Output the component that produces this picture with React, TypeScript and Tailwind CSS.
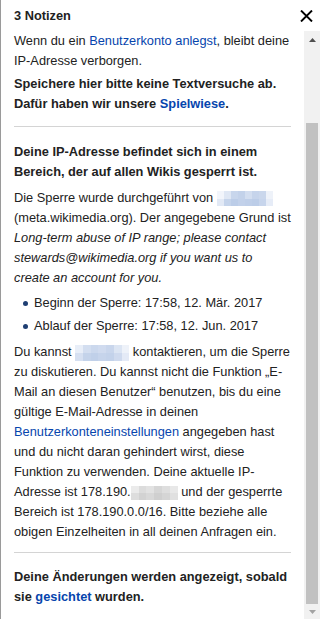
import React from "react";

type BlurProps = { w: string; h: string; rows: string[][] };

function Blur({ w, h, rows }: BlurProps) {
  return (
    <span className={`inline-flex flex-col align-middle ${w} ${h}`}>
      {rows.map((r, i) => (
        <span key={i} className="flex flex-1">
          {r.map((c, j) => (
            <span key={j} className={`flex-1 ${c}`} />
          ))}
        </span>
      ))}
    </span>
  );
}

const blurA = [
  ["bg-[#f2f5fb]", "bg-[#dfe7f4]", "bg-[#c8d6ec]", "bg-[#c3d2ea]", "bg-[#d3def0]", "bg-[#c6d4eb]", "bg-[#cad7ec]", "bg-[#eef2f9]"],
  ["bg-[#e2e9f5]", "bg-[#c5d4eb]", "bg-[#bccde8]", "bg-[#c2d1ea]", "bg-[#bfcfe9]", "bg-[#bccde8]", "bg-[#c7d5ec]", "bg-[#e6ecf7]"],
];
const blurB = [
  ["bg-[#e8eef8]", "bg-[#d3def0]", "bg-[#cbd8ed]", "bg-[#d0dbef]", "bg-[#c9d6ec]", "bg-[#dce5f3]", "bg-[#eef2f9]"],
  ["bg-[#d6e0f1]", "bg-[#c4d3ea]", "bg-[#c0d0e9]", "bg-[#c6d4eb]", "bg-[#c3d2ea]", "bg-[#cfdaee]", "bg-[#e4eaf6]"],
];
const blurC = [
  ["bg-[#ebebeb]", "bg-[#dcdcdc]", "bg-[#e2e2e2]", "bg-[#d6d6d6]", "bg-[#dedede]", "bg-[#e8e8e8]"],
  ["bg-[#dddddd]", "bg-[#d2d2d2]", "bg-[#d8d8d8]", "bg-[#cfcfcf]", "bg-[#d5d5d5]", "bg-[#e0e0e0]"],
];

function A({ children }: { children: React.ReactNode }) {
  return <span className="text-[#0645ad]">{children}</span>;
}

export default function App() {
  return (
    <div
      className="w-[320px] h-[619px] overflow-hidden bg-white border-l border-[#9a9a9a] flex flex-col text-[#222222] text-[12.8px] leading-[20px]"
      style={{ fontFamily: '"Liberation Sans", Arial, sans-serif' }}
    >
      <div className="h-[31px] shrink-0 flex items-center justify-between pl-[13px] pr-[7px]">
        <span className="font-bold">3 Notizen</span>
        <svg width="13" height="12" viewBox="0 0 13 12" className="block">
          <path d="M1 0.5 L12 11.5 M12 0.5 L1 11.5" stroke="#000" strokeWidth="1.9" fill="none" />
        </svg>
      </div>
      <div className="flex flex-1 min-h-0">
        <div className="flex-1 min-w-0 pl-[13px] pr-[13px] overflow-hidden">
          <p>
            Wenn du ein <A>Benutzerkonto anlegst</A>, bleibt deine IP-Adresse verborgen.
          </p>
          <p className="mt-[3px] font-bold">
            Speichere hier bitte keine Textversuche ab. Dafür haben wir unsere <A>Spielwiese</A>.
          </p>
          <div className="mt-[12px] mb-[15px] h-px bg-[#d4d4d4]" />
          <p className="font-bold">Deine IP-Adresse befindet sich in einem Bereich, der auf allen Wikis gesperrt ist.</p>
          <p className="mt-[6px]">
            Die Sperre wurde durchgeführt von{" "}
            <Blur w="w-[56px]" h="h-[15px]" rows={blurA} /> (meta.wikimedia.org). Der angegebene Grund ist{" "}
            <i>
              Long-term abuse of IP range; please contact stewards@wikimedia.org if you want us to create an account for
              you.
            </i>
          </p>
          <ul className="mt-[5px] pl-[20px] flex flex-col gap-[3px]">
            <li className="flex items-center gap-0 relative">
              <span className="absolute left-[-11px] top-[8px] w-[5px] h-[5px] rounded-full bg-[#1f3f73]" />
              Beginn der Sperre: 17:58, 12. Mär. 2017
            </li>
            <li className="flex items-center gap-0 relative">
              <span className="absolute left-[-11px] top-[8px] w-[5px] h-[5px] rounded-full bg-[#1f3f73]" />
              Ablauf der Sperre: 17:58, 12. Jun. 2017
            </li>
          </ul>
          <p className="mt-[6px]">
            Du kannst <Blur w="w-[54px]" h="h-[16px]" rows={blurB} /> kontaktieren, um die Sperre zu diskutieren. Du
            kannst nicht die Funktion „E-Mail an diesen Benutzer“ benutzen, bis du eine gültige E-Mail-Adresse in deinen{" "}
            <A>Benutzerkonteneinstellungen</A> angegeben hast und du nicht daran gehindert wirst, diese Funktion zu
            verwenden. Deine aktuelle IP-Adresse ist 178.190.
            <Blur w="w-[47px]" h="h-[14px]" rows={blurC} /> und der gesperrte Bereich ist 178.190.0.0/16. Bitte beziehe
            alle obigen Einzelheiten in all deinen Anfragen ein.
          </p>
          <div className="mt-[10px] mb-[14px] h-px bg-[#d4d4d4]" />
          <p className="font-bold">
            Deine Änderungen werden angezeigt, sobald sie <A>gesichtet</A> wurden.
          </p>
        </div>
        <div className="w-[16px] shrink-0 bg-[#f1f1f1] flex flex-col">
          <div className="h-[17px] flex justify-center pt-[7px]">
            <svg width="7" height="4" viewBox="0 0 7 4" className="block">
              <path d="M0 4 L3.5 0 L7 4 Z" fill="#505050" />
            </svg>
          </div>
          <div className="h-[75px]" />
          <div className="flex-1 mx-[2px] bg-[#c1c1c1]" />
          <div className="h-[15px] flex justify-center pt-[6px]">
            <svg width="7" height="4" viewBox="0 0 7 4" className="block">
              <path d="M0 0 L7 0 L3.5 4 Z" fill="#a3a3a3" />
            </svg>
          </div>
        </div>
      </div>
    </div>
  );
}
